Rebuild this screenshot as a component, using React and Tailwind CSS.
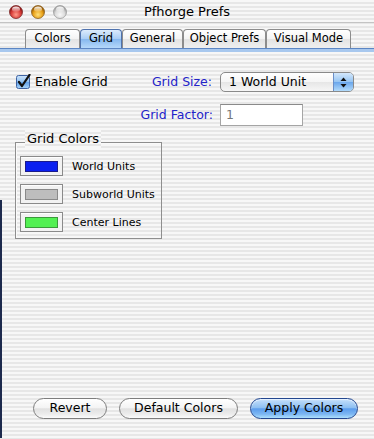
import React from "react";

const stripe =
  "bg-[repeating-linear-gradient(to_bottom,#f7f7f7_0px,#f7f7f7_2px,#e7e7e7_2px,#e7e7e7_4px)]";

function Light({ from, mid, to, border }) {
  return (
    <svg width="14" height="14" viewBox="0 0 14 14">
      <defs>
        <radialGradient id={"g" + from} cx="50%" cy="70%" r="60%">
          <stop offset="0%" stopColor={to} />
          <stop offset="60%" stopColor={mid} />
          <stop offset="100%" stopColor={from} />
        </radialGradient>
        <linearGradient id={"h" + from} x1="0" y1="0" x2="0" y2="1">
          <stop offset="0%" stopColor="#fff" stopOpacity="0.95" />
          <stop offset="100%" stopColor="#fff" stopOpacity="0.1" />
        </linearGradient>
      </defs>
      <circle cx="7" cy="7" r="6.5" fill={`url(#g${from})`} stroke={border} strokeWidth="0.8" />
      <ellipse cx="7" cy="4.2" rx="4" ry="2.6" fill={`url(#h${from})`} />
    </svg>
  );
}

function Tab({ label, selected, w }) {
  return (
    <div
      className={
        "flex h-[19px] items-center justify-center border border-b-0 rounded-t-[4px] text-[11.5px] leading-none " +
        (selected
          ? "border-[#4f72ad] bg-[linear-gradient(to_bottom,#dcebfc_0%,#a9cdf5_50%,#86b8ef_51%,#b5d8fa_100%)] text-black"
          : "border-[#8c8c8c] bg-[linear-gradient(to_bottom,#ffffff_0%,#f3f3f3_50%,#e3e3e3_51%,#efefef_100%)] text-black")
      }
      style={{ width: w }}
    >
      {label}
    </div>
  );
}

function Well({ color, border }) {
  return (
    <div className="flex h-[20px] w-[43px] items-center justify-center border border-[#8a8a8a] bg-[#f2f2f2] shadow-[inset_0_1px_0_#ffffff]">
      <div className="h-[11px] w-[33px] border" style={{ background: color, borderColor: border }} />
    </div>
  );
}

function Button({ children, w, primary }) {
  return (
    <div
      className={
        "flex h-[21px] items-center justify-center rounded-full border text-[12.5px] leading-none " +
        (primary
          ? "border-[#24478f] bg-[linear-gradient(to_bottom,#c6e0fb_0%,#8fc0f2_45%,#5c9ded_52%,#7db7f3_80%,#aee0fd_100%)] shadow-[inset_0_1px_1px_#e8f3ff]"
          : "border-[#7d7d7d] bg-[linear-gradient(to_bottom,#ffffff_0%,#f4f4f4_45%,#e1e1e1_52%,#ececec_80%,#fbfbfb_100%)]")
      }
      style={{ width: w }}
    >
      {children}
    </div>
  );
}

export default function App() {
  return (
    <div
      className={
        "relative h-[439px] w-[374px] overflow-hidden text-black font-['DejaVu_Sans','Liberation_Sans',sans-serif] " +
        stripe
      }
    >
      {/* Title bar */}
      <div className="relative flex h-[23px] items-center border-b border-[#c4c4c4]">
        <div className="flex items-center gap-[8px] pl-[9px] pt-[1px]">
          <Light from="#8f1414" mid="#d9403c" to="#ff9c8a" border="#7a2a2a" />
          <Light from="#9a5a00" mid="#e9a21a" to="#ffe07a" border="#8a6020" />
          <Light from="#a0a0a0" mid="#dcdcdc" to="#f8f8f8" border="#9a9a9a" />
        </div>
        <div className="absolute inset-0 flex items-center justify-center text-[13px] leading-none pt-[1px]">
          Pfhorge Prefs
        </div>
      </div>

      {/* Tabs */}
      <div className="flex pt-[6px] pl-[25px]">
        <Tab label="Colors" w={55} />
        <Tab label="Grid" w={42} selected />
        <Tab label="General" w={61} />
        <Tab label="Object Prefs" w={83} />
        <Tab label="Visual Mode" w={85} />
      </div>
      <div className="h-[4px] border-t border-[#5c86c4] bg-[#a8c8ee]" />

      {/* Content */}
      <div className="relative flex h-[386px] flex-col pl-[16px]">
        <div className="absolute left-0 top-[148px] bottom-0 w-[2px] bg-[#1d2a4d]" />
        <div className="flex items-center pt-[20px]">
          <svg width="15" height="15" viewBox="0 0 15 15" className="mt-[-1px]">
            <defs>
              <linearGradient id="cb" x1="0" y1="0" x2="0" y2="1">
                <stop offset="0%" stopColor="#cfe5fb" />
                <stop offset="50%" stopColor="#8ebff0" />
                <stop offset="51%" stopColor="#5f9fe8" />
                <stop offset="100%" stopColor="#aad6fb" />
              </linearGradient>
            </defs>
            <rect x="0.5" y="1.5" width="13" height="13" rx="2" fill="url(#cb)" stroke="#3f63a3" />
            <path d="M3 8 L6 12 L13.5 0.8" fill="none" stroke="#111" strokeWidth="2.2" strokeLinecap="round" strokeLinejoin="round" />
          </svg>
          <span className="ml-[4px] text-[12.5px] leading-none">Enable Grid</span>
          <span className="ml-auto text-[12.5px] leading-none text-[#2323c8]">Grid Size:</span>
          <div className="ml-[8px] mr-[20px] flex h-[20px] w-[134px] items-stretch overflow-hidden rounded-[5px] border border-[#8a8a8a] bg-[linear-gradient(to_bottom,#ffffff_0%,#f5f5f5_50%,#e6e6e6_51%,#f6f6f6_100%)]">
            <span className="flex flex-1 items-center pl-[8px] text-[12.5px] leading-none">1 World Unit</span>
            <div className="flex w-[20px] items-center justify-center border-l border-[#6b8fc8] bg-[linear-gradient(to_bottom,#d4e8fc_0%,#95c4f2_50%,#6aa6ec_51%,#b2dbfb_100%)]">
              <svg width="7" height="11" viewBox="0 0 7 11">
                <path d="M3.5 0.5 L6.5 4 L0.5 4 Z" fill="#111" />
                <path d="M3.5 10.5 L6.5 7 L0.5 7 Z" fill="#111" />
              </svg>
            </div>
          </div>
        </div>

        <div className="flex items-center pt-[12px]">
          <span className="ml-auto text-[12.5px] leading-none text-[#2323c8]">Grid Factor:</span>
          <div className="ml-[7px] mr-[71px] flex h-[22px] w-[83px] items-center border border-[#a5a5a5] border-t-[#8a8a8a] bg-white pl-[5px] text-[12.5px] leading-none text-[#777]">
            1
          </div>
        </div>

        {/* Group box */}
        <div className="relative mt-[16px] ml-[-1px] h-[97px] w-[147px] border border-[#8e8e8e] shadow-[inset_1px_1px_0_#fafafa]">
          <div className={"absolute left-[9px] top-[-13px] px-[2px] text-[13px] leading-[18px] " + stripe}>
            Grid Colors
          </div>
          <div className="flex flex-col gap-[8px] pl-[4px] pt-[13px]">
            <div className="flex items-center gap-[9px]">
              <Well color="#0a1ff0" border="#1a1a8a" />
              <span className="text-[11px] leading-none">World Units</span>
            </div>
            <div className="flex items-center gap-[9px]">
              <Well color="#bdbdbd" border="#8a8a8a" />
              <span className="text-[11px] leading-none">Subworld Units</span>
            </div>
            <div className="flex items-center gap-[9px]">
              <Well color="#52f052" border="#3a9a3a" />
              <span className="text-[11px] leading-none">Center Lines</span>
            </div>
          </div>
        </div>

        {/* Buttons */}
        <div className="mt-auto mb-[19px] flex items-center pl-[17px]">
          <Button w={74}>Revert</Button>
          <div className="w-[12px]" />
          <Button w={119}>Default Colors</Button>
          <div className="w-[12px]" />
          <Button w={108} primary>Apply Colors</Button>
        </div>
      </div>
    </div>
  );
}
